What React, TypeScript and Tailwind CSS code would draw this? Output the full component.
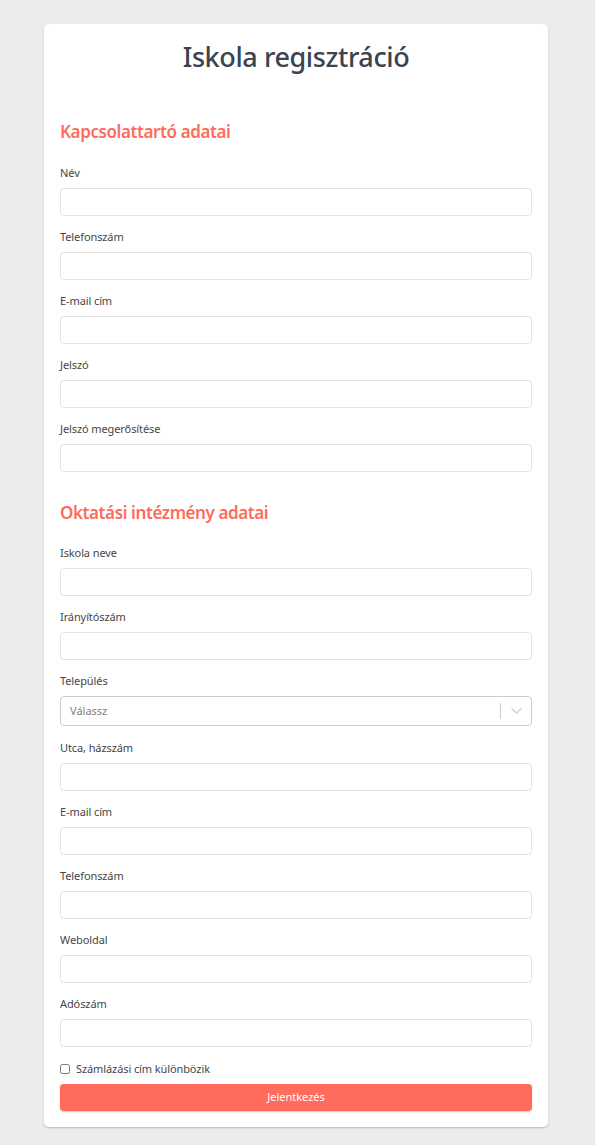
import React from "react";

const contactFields = [
  { label: "Név", type: "text", focus: true },
  { label: "Telefonszám", type: "tel" },
  { label: "E-mail cím", type: "email" },
  { label: "Jelszó", type: "password" },
  { label: "Jelszó megerősítése", type: "password" }
];

const schoolFieldsTop = [
  { label: "Iskola neve", type: "text" },
  { label: "Irányítószám", type: "text" }
];

const schoolFieldsBottom = [
  { label: "Utca, házszám", type: "text" },
  { label: "E-mail cím", type: "email" },
  { label: "Telefonszám", type: "tel" },
  { label: "Weboldal", type: "text" },
  { label: "Adószám", type: "text" }
];

function Field({ label, type, focus }: { label: string; type: string; focus?: boolean }) {
  return (
    <div className="mt-[13px] first:mt-0">
      <label className="mb-[7px] block text-[11px] leading-4 tracking-[-0.1px] text-[#464646]">{label}</label>
      <input
        type={type}
        autoFocus={focus}
        className="block h-7 w-full rounded-[4px] border border-[#e3e3e3] bg-white px-0 text-[11px] text-[#333] caret-[#333] outline-none"
      />
    </div>
  );
}

function SectionTitle({ children, className }: { children: React.ReactNode; className: string }) {
  return (
    <h2 className={`text-[17px] font-semibold leading-6 tracking-[-0.4px] text-[#ff6b5b] ${className}`}>
      {children}
    </h2>
  );
}

export default function App() {
  return (
    <div className="min-h-[1145px] bg-[#ebecee] pb-[18px] pt-6 font-['Noto_Sans',sans-serif]">
      <form
        onSubmit={(e) => e.preventDefault()}
        className="ml-[44px] w-[504px] rounded-[5px] bg-white px-4 pb-4 pt-4 shadow-[0_1px_2px_rgba(0,0,0,0.22)]"
      >
        <h1 className="text-center text-[27px] font-medium leading-[34px] tracking-[-0.4px] text-[#3a4350]">
          Iskola regisztráció
        </h1>

        <SectionTitle className="mt-[46px]">Kapcsolattartó adatai</SectionTitle>
        <div className="mt-[21px]">
          {contactFields.map((f) => (
            <Field key={f.label} {...f} />
          ))}
        </div>

        <SectionTitle className="mt-[29px]">Oktatási intézmény adatai</SectionTitle>
        <div className="mt-[20px]">
          {schoolFieldsTop.map((f) => (
            <Field key={f.label} {...f} />
          ))}

          <div className="mt-[13px]">
            <label className="mb-[7px] block text-[11px] leading-4 tracking-[-0.1px] text-[#464646]">Település</label>
            <div className="flex h-[30px] items-center rounded-[4px] border border-[#cccccc] bg-white">
              <span className="flex-1 pl-[9px] text-[11px] text-[#808080]">Válassz</span>
              <span className="h-4 w-px bg-[#cccccc]" />
              <span className="flex w-[30px] items-center justify-center">
                <svg width="11" height="6" viewBox="0 0 11 6" fill="none">
                  <path d="M0.5 0.5 L5.5 5 L10.5 0.5" stroke="#cccccc" strokeWidth="1.2" />
                </svg>
              </span>
            </div>
          </div>

          <div className="h-px" />
          {schoolFieldsBottom.map((f) => (
            <Field key={f.label + f.type} {...f} />
          ))}
        </div>

        <label className="mt-[14px] flex h-4 items-center gap-[6px] text-[11px] leading-4 tracking-[-0.1px] text-[#464646]">
          <input type="checkbox" className="ml-0 h-[10px] w-[10px] rounded-[2px] border border-[#888]" />
          Számlázási cím különbözik
        </label>

        <button
          type="submit"
          className="mt-[7px] block h-[27px] w-full rounded-[4px] bg-[#ff6b5c] text-[11px] text-white shadow-[0_1px_2px_rgba(0,0,0,0.2)]"
        >
          Jelentkezés
        </button>
      </form>
    </div>
  );
}
